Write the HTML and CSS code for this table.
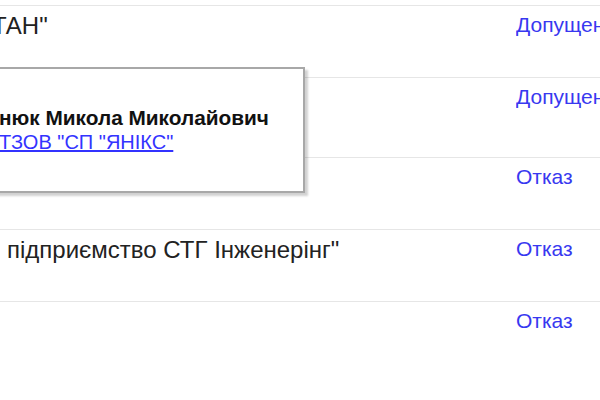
FILE: index.html
```html
<!DOCTYPE html>
<html lang="uk">
<head>
<meta charset="utf-8">
<link rel="stylesheet" href="styles.css">
</head>
<body>
<div class="table">
  <div class="row">
    <div class="name shift">ТАН"</div>
    <div class="status"><a href="#">Допущен</a></div>
  </div>
  <div class="row row-tall">
    <div class="name"></div>
    <div class="status"><a href="#">Допущен</a></div>
  </div>
  <div class="row">
    <div class="name"></div>
    <div class="status"><a href="#">Отказ</a></div>
  </div>
  <div class="row">
    <div class="name indent">підприємство СТГ Інженерінг"</div>
    <div class="status"><a href="#">Отказ</a></div>
  </div>
  <div class="row">
    <div class="name"></div>
    <div class="status"><a href="#">Отказ</a></div>
  </div>
</div>
<div class="popup">
  <div class="popup-name">нюк Микола Миколайович</div>
  <a class="popup-link" href="#">ТЗОВ "СП "ЯНІКС"</a>
</div>
</body>
</html>
```

FILE: styles.css
```css
html, body {
  margin: 0;
  padding: 0;
  width: 600px;
  height: 400px;
  overflow: hidden;
  background: #fff;
  font-family: "Liberation Sans", Arial, sans-serif;
}
.table {
  padding-top: 5px;
}
.row {
  display: grid;
  grid-template-columns: 516px 1fr;
  border-top: 1px solid #e6e6e6;
  height: 71px;
}
.row-tall {
  height: 79px;
}
.name, .status {
  padding-top: 6px;
  white-space: nowrap;
  overflow: hidden;
}
.name {
  font-size: 24px;
  line-height: 28px;
  color: #222;
}
.shift {
  text-indent: -8px;
}
.status {
  font-size: 21px;
  line-height: 26px;
}
.indent {
  padding-left: 7px;
}
.status a {
  color: #3838f0;
  text-decoration: none;
}
.popup {
  position: absolute;
  left: -20px;
  top: 67px;
  width: 325px;
  height: 126px;
  background: #fff;
  border: 2px solid #a8a8a8;
  box-shadow: 3px 3px 2px rgba(0, 0, 0, 0.18);
  padding: 37px 0 0 17px;
  box-sizing: border-box;
}
.popup-name {
  font-weight: bold;
  font-size: 20.8px;
  line-height: 24px;
  color: #111;
}
.popup-link {
  font-size: 20px;
  line-height: 24px;
  color: #3333ff;
  text-decoration: underline;
}
```
